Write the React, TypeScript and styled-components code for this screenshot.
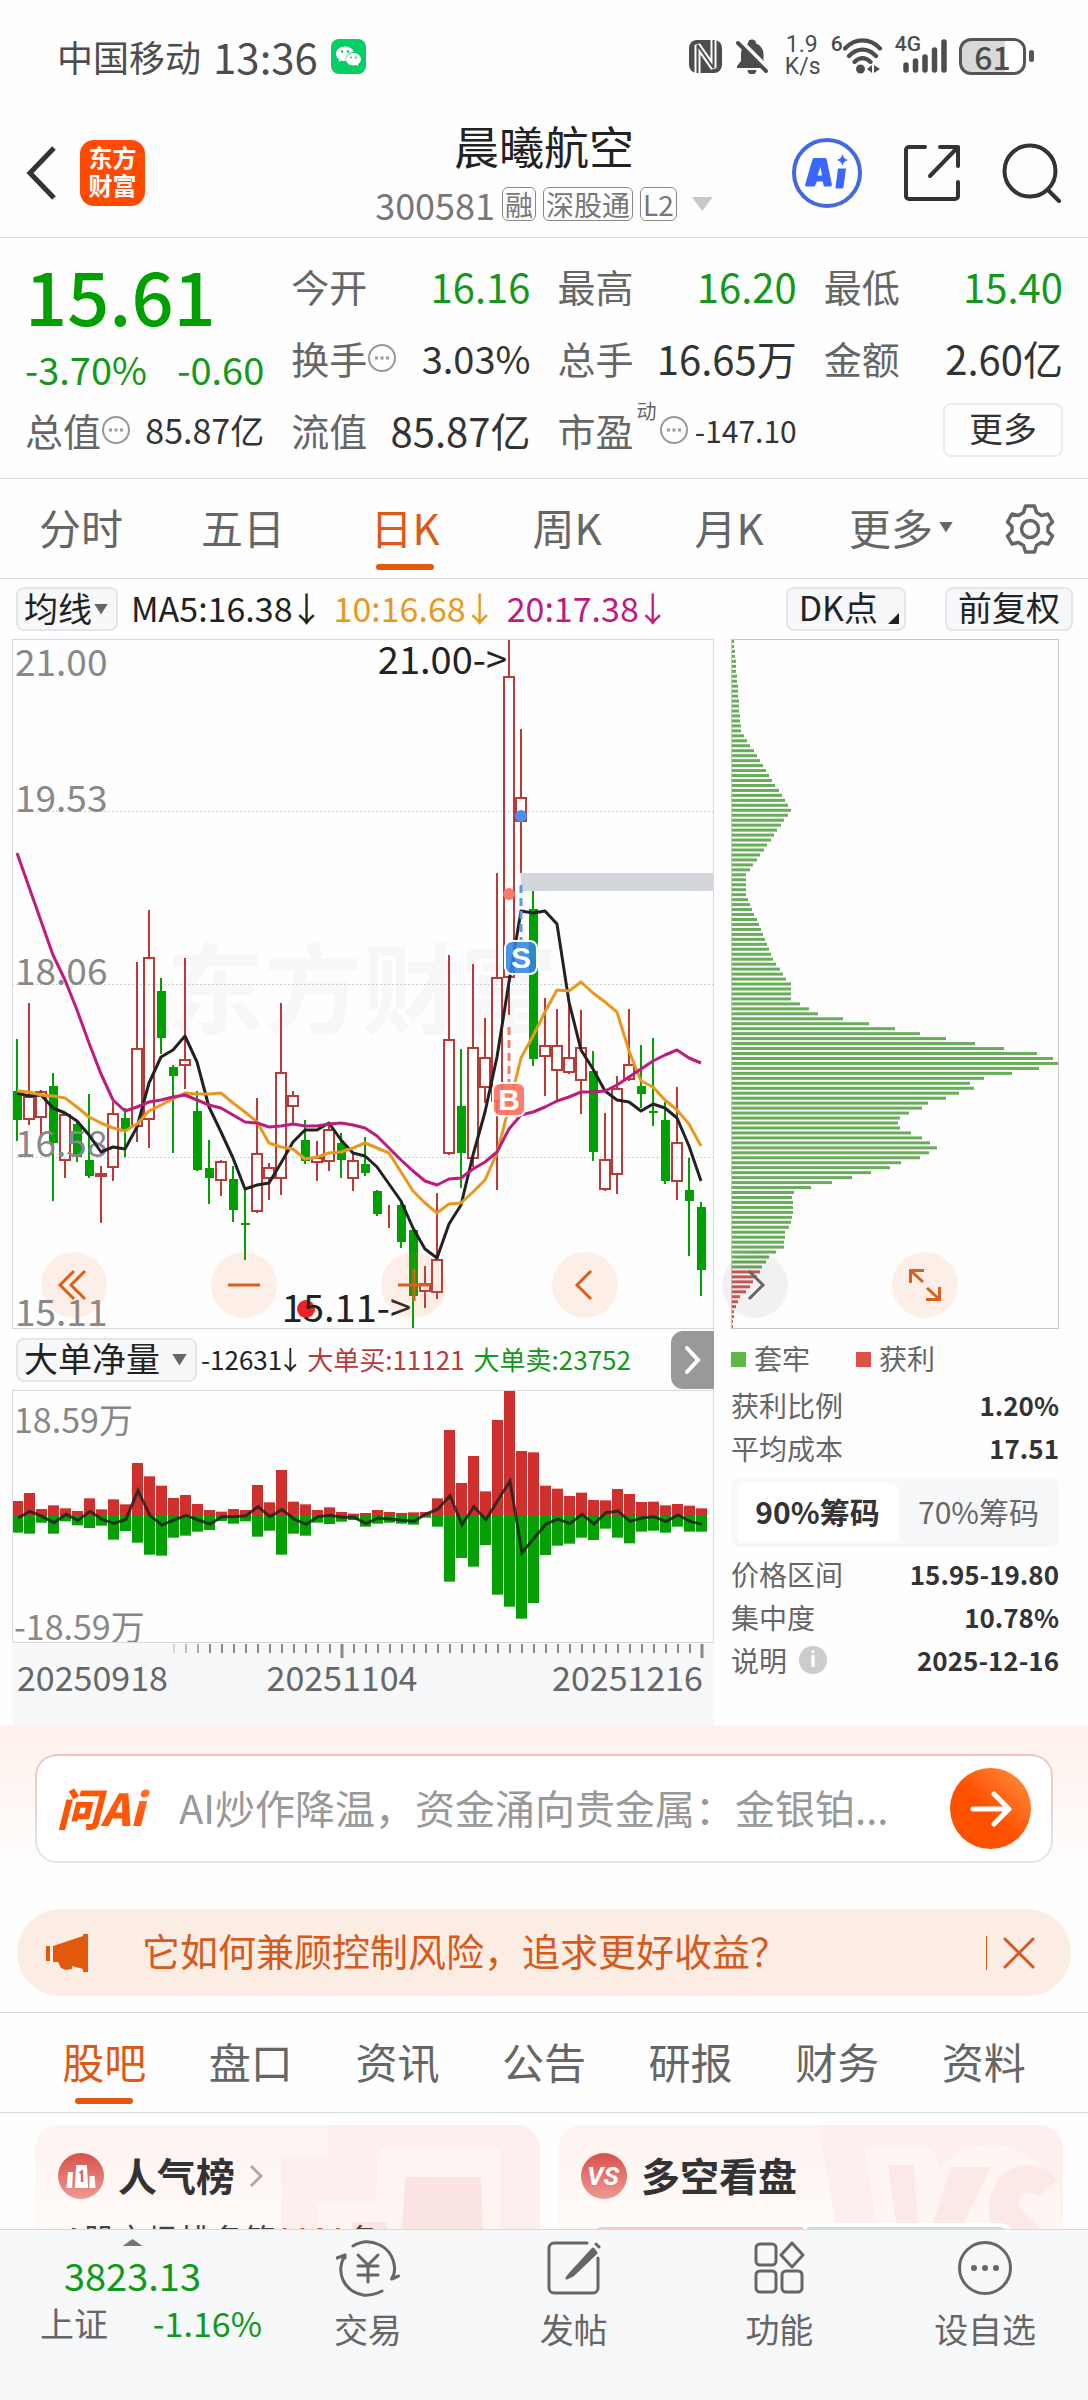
import React, { useState } from "react";
import styled, { createGlobalStyle, css } from "styled-components";

const FONT = '"Noto Sans CJK SC", "Noto Sans", sans-serif';
const GREEN = "#12981a";
const RED = "#b93a36";
const ORANGE = "#e3590c";
const LINE = "#d9d9d9";

const GlobalStyle = createGlobalStyle`
  * { box-sizing: border-box; }
  body { margin: 0; background: #fefefe; font-family: ${FONT}; color: #333; }
  button, input, select { font-family: inherit; color: inherit; margin: 0; }
  button { padding: 0; border: 0; background: none; cursor: pointer; }
  svg { display: block; flex: none; }
`;

/* ---------- page frame ---------- */

const Shell = styled.div`
  display: flex;
  flex-direction: column;
  height: 100vh;
  overflow: hidden;
`;

const Content = styled.main`
  flex: 1;
  min-height: 0;
  overflow: hidden;
`;

/* ---------- status bar ---------- */

const StatusBar = styled.div`
  display: flex;
  align-items: center;
  height: 112px;
  padding: 0 54px 0 57px;
  color: #4d4d4d;
`;
const Carrier = styled.span`
  font-size: 36px;
  line-height: 48px;
`;
const Clock = styled.span`
  margin: 0 13px 0 12px;
  font-size: 42px;
  line-height: 48px;
`;
const StatusRight = styled.div`
  display: flex;
  align-items: center;
  margin-left: auto;
`;
const Silent = styled.span`
  margin-left: 14px;
`;
const Speed = styled.div`
  width: 34px;
  margin: 0 12px 0 17px;
  font: 23px/22px Roboto, sans-serif;
  text-align: center;
`;
const SmallSup = styled.span<{ $tuck?: boolean }>`
  align-self: flex-start;
  margin: ${(p) => (p.$tuck ? "0 -18px 0 12px" : "0")};
  font: 500 21px/20px Roboto, sans-serif;
`;
const Battery = styled.div`
  display: flex;
  align-items: center;
  justify-content: center;
  width: 67px;
  height: 37px;
  margin: 0 3px 0 12px;
  border: 3px solid #555;
  border-radius: 12px;
  background: linear-gradient(90deg, #d9d9d9 70%, #fff 70%);
  font: 500 32px/30px ${FONT};
`;
const BatteryTip = styled.span`
  width: 5px;
  height: 12px;
  border-radius: 3px;
  background: #555;
`;

/* ---------- header ---------- */

const Header = styled.header`
  display: grid;
  grid-template-columns: 1fr auto 1fr;
  height: 126px;
  border-bottom: 1px solid ${LINE};
`;
const HeaderSide = styled.div<{ $end?: boolean }>`
  display: flex;
  align-items: center;
  gap: ${(p) => (p.$end ? "41px" : "24px")};
  justify-content: ${(p) => (p.$end ? "flex-end" : "flex-start")};
  padding: ${(p) => (p.$end ? "0 26px 4px 0" : "0 0 4px 26px")};
`;
const Brand = styled.a`
  display: flex;
  flex-direction: column;
  align-items: center;
  justify-content: center;
  width: 65px;
  height: 66px;
  padding-bottom: 4px;
  border-radius: 14px;
  background: #ff4a00;
  color: #fff;
  font: 700 24px/28px ${FONT};
  text-decoration: none;
`;
const TitleBlock = styled.div`
  display: flex;
  flex-direction: column;
  align-items: center;
  padding-top: 6px;
`;
const Title = styled.h1`
  margin: 0;
  color: #222;
  font-size: 45px;
  font-weight: 400;
  line-height: 56px;
`;
const Caret = styled.span<{ $w: number; $h: number; $color: string; $up?: boolean }>`
  width: ${(p) => p.$w}px;
  height: ${(p) => p.$h}px;
  background: ${(p) => p.$color};
  clip-path: ${(p) => (p.$up ? "polygon(0 100%, 100% 100%, 50% 0)" : "polygon(0 0, 100% 0, 50% 100%)")};
  pointer-events: none;
`;
const CodeLine = styled.div`
  display: flex;
  align-items: center;
  gap: 7px;
  margin-top: 13px;
  color: #777;
  font-size: 36px;
  line-height: 34px;

  ${Caret} { margin-left: 8px; }
`;
const Tag = styled.span`
  padding: 0 2px;
  border: 1px solid #888;
  border-radius: 6px;
  font-size: 28px;
  line-height: 32px;
`;

/* ---------- quote ---------- */

const Quote = styled.section`
  display: grid;
  grid-template-columns: repeat(4, minmax(0, 1fr));
  grid-template-rows: 73px 72px 72px;
  column-gap: 27px;
  padding: 11px 25px 12px;
  border-bottom: 1px solid ${LINE};
`;
const PriceBlock = styled.div`
  grid-row: span 2;
  color: ${GREEN};
`;
const Price = styled.div`
  color: #00a000;
  font-size: 74px;
  font-weight: 500;
  line-height: 90px;
`;
const Change = styled.div`
  display: flex;
  justify-content: space-between;
  margin-top: 6px;
  font-size: 38px;
  line-height: 48px;
`;
const Cell = styled.div`
  display: flex;
  align-items: center;
  white-space: nowrap;
`;
const CellName = styled.span`
  color: #666;
  font-size: 38px;
  line-height: 48px;
`;
const CellValue = styled.span<{ $size?: number; $green?: boolean }>`
  margin-left: auto;
  color: ${(p) => (p.$green ? GREEN : "#333")};
  font-size: ${(p) => p.$size ?? 40}px;
  line-height: 48px;
`;
const CellSup = styled.sup`
  align-self: flex-start;
  margin: 5px 2px 0 3px;
  color: #666;
  font-size: 20px;
  line-height: 24px;
`;
const MoreButton = styled.button`
  width: 120px;
  height: 54px;
  margin-left: auto;
  padding-bottom: 4px;
  border: 2px solid #ececec;
  border-radius: 8px;
  font-size: 34px;
  line-height: 44px;
`;

/* ---------- tabs ---------- */

const TabBar = styled.nav<{ $pad: number }>`
  display: flex;
  height: 100px;
  padding: 0 ${(p) => p.$pad}px;
  border-bottom: 1px solid ${LINE};
`;
const Tab = styled.button<{ $on: boolean }>`
  display: flex;
  flex: 1;
  flex-direction: column;
  align-items: center;
  padding-top: 18px;
  color: ${(p) => (p.$on ? "#dc5a14" : "#666")};
  font-size: 42px;
  line-height: 60px;

  &::after {
    width: 58px;
    height: 6px;
    margin-top: 7px;
    border-radius: 3px;
    background: ${(p) => (p.$on ? ORANGE : "transparent")};
    content: "";
  }
`;
const TabLabel = styled.span<{ $menu: boolean }>`
  display: flex;
  align-items: center;
  gap: 6px;
  margin-left: ${(p) => (p.$menu ? 20 : 0)}px;
`;
const GearButton = styled.button`
  display: flex;
  align-items: center;
  justify-content: center;
  width: 116px;
`;

/* ---------- chart area ---------- */

const MaRow = styled.div`
  display: flex;
  align-items: center;
  height: 60px;
  padding: 0 15px 0 16px;
  color: #222;
`;
const chip = css`
  border: 2px solid #e3e6ea;
  border-radius: 8px;
  background: #f7f8fa;
  color: #222;
  font-size: 34px;
  line-height: 36px;
`;
const Picker = styled.span<{ $gap: number }>`
  ${chip}
  display: flex;
  align-items: center;
  flex: none;
  height: 44px;
  padding: 0 8px 0 6px;

  select {
    height: 40px;
    padding: 0 ${(p) => p.$gap + 14}px 3px 0;
    border: 0;
    outline: 0;
    appearance: none;
    background: none;
    font-size: 34px;
    line-height: 36px;
  }
  ${Caret} { margin-left: -14px; }
`;
const MaValues = styled.div`
  display: flex;
  gap: 13px;
  margin-left: 13px;
  padding-bottom: 3px;
  font-size: 34px;
  line-height: 44px;
`;
const MaValue = styled.span<{ $color: string }>`
  display: flex;
  color: ${(p) => p.$color};
`;
const Arrow = styled.span`
  display: flex;
  justify-content: center;
  width: 28px;
`;
const MaButtons = styled.div`
  display: flex;
  gap: 39px;
  margin-left: auto;
`;
const ChipButton = styled.button`
  ${chip}
  display: flex;
  align-items: flex-end;
  justify-content: center;
  gap: 10px;
  height: 44px;
  padding: 0 11px 4px;
`;
const Corner = styled.span`
  width: 11px;
  height: 11px;
  margin: 0 -6px 1px 0;
  background: #222;
  clip-path: polygon(100% 0, 100% 100%, 0 100%);
`;
const Charts = styled.section`
  position: relative;
  display: grid;
  grid-template-columns: minmax(0, 702fr) minmax(0, 328fr);
  column-gap: 17px;
  padding: 0 29px 0 12px;
`;
const Plot = styled.svg`
  width: 100%;
  height: auto;
  overflow: visible;
  font-family: ${FONT};
`;
const PlotButtons = styled.div`
  position: absolute;
  top: 613px;
  right: 130px;
  left: 41px;
  display: flex;
  justify-content: space-between;
`;
const RoundButton = styled.button<{ $grey?: boolean }>`
  display: flex;
  align-items: center;
  justify-content: center;
  width: 66px;
  height: 66px;
  border-radius: 50%;
  background: ${(p) => (p.$grey ? "rgba(0, 0, 0, 0.05)" : "rgba(248, 120, 50, 0.11)")};
  color: ${(p) => (p.$grey ? "#666" : "#d9601c")};
`;
const IndicatorRow = styled.div`
  display: flex;
  align-items: center;
  height: 61px;
  padding-left: 4px;
  white-space: nowrap;
`;
const Flows = styled.div`
  display: flex;
  gap: 9px;
  margin-left: 4px;
  padding-bottom: 2px;
  font-size: 26px;
  line-height: 40px;
`;
const Flow = styled.span<{ $color: string }>`
  display: flex;
  color: ${(p) => p.$color};
`;
const FlowArrow = styled.span`
  display: flex;
  justify-content: center;
  width: 16px;
`;
const Expand = styled.button`
  display: flex;
  align-items: center;
  justify-content: center;
  width: 43px;
  height: 58px;
  margin-left: auto;
  border-radius: 12px 0 0 12px;
  background: #999;
`;

const Legend = styled.div`
  display: flex;
  gap: 46px;
  height: 43px;
  margin: 8px 0 3px;
`;
const LegendItem = styled.span<{ $color: string }>`
  display: flex;
  align-items: center;
  gap: 8px;
  color: #666;
  font-size: 28px;
  line-height: 43px;

  &::before {
    width: 15px;
    height: 15px;
    margin-top: 2px;
    background: ${(p) => p.$color};
    content: "";
  }
`;
const Facts = styled.dl`
  margin: 0;
`;
const Fact = styled.div`
  display: flex;
  align-items: center;
  justify-content: space-between;
  height: 43px;
  line-height: 40px;

  dt {
    display: flex;
    align-items: center;
    gap: 12px;
    color: #666;
    font-size: 28px;
  }
  dd {
    margin: 0;
    font-size: 26px;
    font-weight: 700;
  }
`;
const InfoDot = styled.span`
  display: flex;
  align-items: center;
  justify-content: center;
  width: 28px;
  height: 28px;
  border-radius: 50%;
  background: #ccc;
  color: #fff;
  font: 700 22px/28px Roboto, sans-serif;
`;
const Segments = styled.div`
  display: flex;
  height: 69px;
  margin: 9px 0 5px;
  padding: 5px 0 5px 6px;
  border-radius: 8px;
  background: #f7f8fa;
`;
const Segment = styled.button<{ $on: boolean }>`
  flex: 1;
  padding-bottom: 3px;
  border-radius: 6px;
  background: ${(p) => (p.$on ? "#fff" : "transparent")};
  color: ${(p) => (p.$on ? "#333" : "#666")};
  font-size: 30px;
  font-weight: ${(p) => (p.$on ? 700 : 400)};
  line-height: 44px;
`;

/* ---------- assistant and notice ---------- */

const Promo = styled.section`
  padding: 29px 17px 16px;
  border-bottom: 1px solid ${LINE};
  background: linear-gradient(#fff1ec, #fefefe 150px);
`;
const AskBox = styled.form`
  display: flex;
  align-items: center;
  height: 109px;
  margin: 0 18px 46px;
  padding: 0 20px;
  border: 2px solid transparent;
  border-radius: 22px;
  background: linear-gradient(#fff, #fff) padding-box, linear-gradient(#f3c4b8, #dfe7ec) border-box;
`;
const AskLogo = styled.span`
  display: flex;
  flex: none;
  align-items: center;
  width: 122px;
  padding-bottom: 4px;
  background: linear-gradient(60deg, #ff5000, #ff5a0a 60%, #ff9a5c);
  background-clip: text;
  color: transparent;
  font-size: 44px;
  font-style: italic;
  font-weight: 900;
  line-height: 56px;
`;
const AskInput = styled.input`
  flex: 1;
  min-width: 0;
  height: 60px;
  padding: 0 0 3px;
  border: 0;
  outline: 0;
  background: none;
  font-size: 40px;

  &::placeholder { color: #999; opacity: 1; }
`;
const AskGo = styled.button`
  display: flex;
  align-items: center;
  justify-content: center;
  width: 81px;
  height: 81px;
  border-radius: 50%;
  background: linear-gradient(45deg, #ff5000 45%, #ff9244);
`;
const Notice = styled.div`
  display: flex;
  align-items: center;
  height: 87px;
  padding: 0 36px 0 28px;
  border-radius: 44px;
  background: #fcede4;
  color: #d65a1c;
`;
const NoticeText = styled.a`
  flex: 1;
  padding: 0 0 5px 52px;
  color: inherit;
  font-size: 38px;
  line-height: 50px;
  text-decoration: none;
`;
const NoticeClose = styled.button`
  display: flex;
  padding-left: 16px;
  border-left: 1px solid #d65a1c;
`;

/* ---------- community cards ---------- */

const Cards = styled.section`
  display: grid;
  grid-template-columns: repeat(2, minmax(0, 1fr));
  gap: 18px;
  padding: 12px 25px 0 35px;
`;
const Card = styled.article`
  position: relative;
  height: 260px;
  padding: 21px 23px 0;
  overflow: hidden;
  border-radius: 24px;
  background: linear-gradient(#fef3f1, #fffaf7 90px);
`;
const CardArt = styled.svg`
  position: absolute;
  top: 0;
  right: 0;
`;
const CardHead = styled.h2`
  position: relative;
  display: flex;
  align-items: center;
  gap: 14px;
  height: 60px;
  margin: 0;
  font-size: 39px;
  font-weight: 700;
  line-height: 56px;
`;
const CardTitle = styled.span`
  padding-bottom: 5px;
`;
const CardText = styled.p`
  position: relative;
  margin: 8px 0 0 6px;
  color: #444;
  font-size: 32px;
  line-height: 48px;

  em { color: #d8402c; font-style: normal; }
`;
const Versus = styled.div`
  position: relative;
  display: flex;
  height: 40px;
  margin: 17px 22px 0 2px;
  border: 4px solid #fff;
  border-radius: 20px;
  background: linear-gradient(100deg, #f3c9c5 50%, #fff 50%, #fff 51%, #c9ddda 51%);
`;

/* ---------- bottom bar ---------- */

const BottomBar = styled.footer`
  display: flex;
  flex: none;
  height: 171px;
  border-top: 1px solid ${LINE};
  background: #f7f8fa;
`;
const IndexCell = styled.button`
  display: flex;
  flex-direction: column;
  align-items: center;
  width: 265px;
  padding-top: 9px;
  color: ${GREEN};
  font-size: 38px;
  line-height: 48px;
`;
const IndexValue = styled.span`
  margin-top: 5px;
`;
const IndexRow = styled.span`
  display: flex;
  justify-content: space-between;
  width: 100%;
  padding: 0 3px 0 40px;
  font-size: 34px;
`;
const IndexName = styled.span`
  color: #666;
`;
const BarButton = styled.button`
  display: flex;
  flex: 1;
  flex-direction: column;
  align-items: center;
  padding-top: 9px;
  color: #666;
  font-size: 34px;
  line-height: 48px;

  svg { margin-bottom: 8px; }
`;

/* ---------- data ---------- */

const LEFT = 12;
const STEP = 12;
const candleX = (i: number) => 17 + i * STEP;

// [rising, high, body top, body bottom, low]
type Candle = [0 | 1, number, number, number, number];
const candles: Candle[] = [
  [0, 1039, 1091, 1120, 1141], [1, 1003, 1096, 1120, 1125], [1, 1090, 1091, 1118, 1137],
  [0, 1073, 1086, 1143, 1201], [1, 1112, 1114, 1161, 1178], [0, 1120, 1124, 1157, 1162],
  [0, 1094, 1160, 1176, 1178], [1, 1166, 1173, 1177, 1223], [1, 1102, 1113, 1168, 1181],
  [0, 1108, 1118, 1130, 1157], [1, 962, 1048, 1127, 1142], [1, 910, 957, 1120, 1148],
  [0, 978, 991, 1038, 1054], [0, 1065, 1067, 1076, 1153], [1, 958, 1059, 1066, 1089],
  [0, 1091, 1111, 1170, 1171], [0, 1140, 1168, 1178, 1204], [1, 1160, 1161, 1181, 1196],
  [0, 1166, 1179, 1210, 1222], [0, 1190, 1223, 1225, 1260], [1, 1098, 1153, 1212, 1213],
  [1, 1163, 1167, 1179, 1200], [1, 1003, 1072, 1179, 1195], [1, 1091, 1095, 1107, 1124],
  [0, 1120, 1140, 1161, 1164], [1, 1141, 1157, 1163, 1181], [1, 1123, 1129, 1162, 1171],
  [0, 1133, 1143, 1160, 1178], [1, 1153, 1160, 1179, 1191], [0, 1137, 1164, 1173, 1176],
  [0, 1190, 1191, 1214, 1216], [1, 1205, 1213, 1213, 1228], [0, 1203, 1205, 1242, 1248],
  [0, 1229, 1230, 1296, 1329], [1, 1266, 1283, 1292, 1308], [1, 1193, 1259, 1293, 1299],
  [1, 955, 1039, 1154, 1155], [0, 1049, 1106, 1153, 1188], [1, 964, 1047, 1159, 1167],
  [1, 1018, 1057, 1088, 1103], [1, 873, 977, 1102, 1190], [1, 639, 676, 978, 1015],
  [1, 729, 797, 822, 873], [0, 891, 909, 1059, 1066], [1, 998, 1045, 1057, 1096],
  [1, 1009, 1045, 1071, 1101], [1, 1000, 1057, 1073, 1074], [1, 1010, 1047, 1081, 1114],
  [0, 1051, 1071, 1152, 1161], [1, 1113, 1159, 1190, 1191], [1, 1076, 1088, 1175, 1194],
  [1, 1009, 1064, 1080, 1081], [0, 1045, 1086, 1094, 1108], [0, 1038, 1111, 1113, 1126],
  [0, 1102, 1120, 1181, 1184], [1, 1087, 1142, 1182, 1200], [0, 1158, 1190, 1201, 1256],
  [0, 1202, 1207, 1270, 1296],
];

const ma5 = [
  1093, 1096, 1095, 1108, 1113, 1121, 1135, 1152, 1147, 1149, 1127, 1083, 1057, 1050, 1036, 1062,
  1107, 1132, 1158, 1189, 1185, 1183, 1163, 1142, 1130, 1130, 1123, 1140, 1153, 1156, 1167, 1184,
  1201, 1228, 1249, 1258, 1224, 1205, 1155, 1112, 1057, 982, 911, 913, 911, 924, 1002, 1050, 1069,
  1091, 1100, 1102, 1111, 1104, 1108, 1118, 1146, 1181,
];
const ma10 = [
  1091, 1092, 1095, 1096, 1098, 1107, 1117, 1123, 1128, 1131, 1124, 1111, 1105, 1099, 1093, 1094,
  1094, 1093, 1103, 1112, 1122, 1143, 1147, 1149, 1159, 1157, 1153, 1152, 1148, 1143, 1148, 1153,
  1172, 1191, 1203, 1213, 1204, 1203, 1192, 1180, 1153, 1107, 1058, 1036, 1012, 990, 991, 982, 993,
  1002, 1012, 1051, 1081, 1087, 1100, 1110, 1124, 1146,
];
const ma20 = [
  853, 887, 921, 955, 980, 1010, 1043, 1074, 1100, 1111, 1107, 1102, 1100, 1097, 1095, 1100, 1105,
  1108, 1115, 1122, 1123, 1127, 1126, 1124, 1126, 1126, 1124, 1123, 1125, 1128, 1136, 1148, 1160,
  1171, 1181, 1185, 1179, 1178, 1169, 1162, 1152, 1129, 1115, 1112, 1107, 1101, 1097, 1092, 1092,
  1091, 1085, 1077, 1069, 1061, 1055, 1050, 1058, 1063,
];

const bigBuy = [
  45, 69, 21, 32, 23, 15, 53, 20, 50, 35, 159, 119, 91, 54, 63, 36, 18, 13, 21, 18, 93, 41, 138, 43,
  35, 18, 26, 12, 7, 9, 18, 12, 9, 11, 12, 53, 258, 99, 180, 74, 288, 378, 195, 191, 91, 82, 60, 70,
  48, 47, 81, 66, 42, 43, 32, 36, 31, 23,
];
const bigSell = [
  50, 53, 20, 53, 16, 28, 36, 29, 71, 45, 80, 116, 119, 65, 59, 47, 42, 15, 23, 16, 62, 44, 116, 53,
  59, 20, 24, 17, 12, 32, 23, 20, 23, 26, 5, 32, 197, 126, 152, 87, 236, 272, 308, 261, 117, 89, 83,
  65, 72, 38, 65, 82, 47, 44, 50, 32, 47, 47,
];
const netFlow = [
  -6, 14, -1, -20, 5, -13, 14, -10, -22, -10, 77, 1, -27, -12, 2, -12, -24, -2, -2, 1, 28, -2, 19, -9,
  -25, -2, 2, -4, -4, -23, -6, -9, -13, -16, 6, 21, 61, -26, 28, -11, 48, 105, -110, -67, -24, -9,
  -23, 5, -24, 10, 15, -16, -6, -2, -17, 3, -16, -25,
];

// chip distribution: [level, length] knots, filled in linearly between
const chipKnots: [number, number][] = [
  [0, 2], [18, 9], [34, 59], [46, 18], [47, 14], [51, 14], [61, 35], [64, 41], [68, 54], [69, 59],
  [72, 59], [75, 86], [76, 111], [80, 214], [82, 272], [83, 305], [84, 321], [85, 327], [86, 307],
  [88, 252], [89, 238], [90, 242], [91, 227], [92, 214], [93, 196], [94, 190], [95, 177], [96, 168],
  [97, 166], [98, 168], [99, 179], [100, 190], [102, 205], [104, 188], [105, 169], [106, 158],
  [108, 120], [110, 79], [111, 62], [112, 60], [114, 61], [116, 60], [118, 57], [119, 53],
  [122, 52], [123, 44], [124, 37], [126, 30], [127, 28], [130, 18], [131, 14], [132, 8], [135, 2],
  [138, 1],
];
const CHIP_LEVELS = 139;
const chips = Array.from({ length: CHIP_LEVELS }, (_, level) => {
  const k = Math.max(1, chipKnots.findIndex(([l]) => l >= level));
  const [l0, v0] = chipKnots[k - 1];
  const [l1, v1] = chipKnots[k];
  return Math.round(v0 + ((v1 - v0) * (level - l0)) / (l1 - l0));
});

const path = (values: number[]) => values.map((y, i) => `${candleX(i)},${y}`).join(" ");

/* ---------- drawings ---------- */

const MoreDots = () => (
  <svg width="30" height="30" viewBox="0 0 30 30" fill="none" stroke="#999" strokeWidth="2">
    <circle cx="15" cy="15" r="13" />
    <path d="M8 15h3M13.500 15h3M19 15h3" strokeWidth="3" />
  </svg>
);

const PriceChart = () => (
  <Plot viewBox="12 639 702 690" role="img" aria-label="日K">
    <text x="166" y="1026" fontSize="98" fontWeight="700" fill="#f7f7f7">东方财富</text>
    <g stroke="#cfcfcf" strokeDasharray="2 2">
      <path d="M12 811.500H714M12 984.500H714M12 1157.500H714" />
    </g>
    <rect x="521" y="873" width="193" height="18" fill="#d3d7dc" />
    {candles.map(([up, high, top, bottom, low], i) => {
      const x = candleX(i);
      return up ? (
        <g key={i} stroke={RED} strokeWidth="2" fill="none">
          <path d={`M${x} ${high}V${top}M${x} ${bottom}V${low}`} />
          <rect x={x - 5} y={top + 1} width="10" height={Math.max(0, bottom - top - 2)} />
        </g>
      ) : (
        <g key={i} fill="#00a000">
          <rect x={x - 1} y={high} width="2" height={low - high} />
          <rect x={x - 4} y={top} width="9" height={bottom - top} />
        </g>
      );
    })}
    <g fontSize="37" fill="#888">
      <text x="15" y="676">21.00</text>
      <text x="15" y="812">19.53</text>
      <text x="15" y="985">18.06</text>
      <text x="15" y="1157">16.58</text>
      <text x="15" y="1326">15.11</text>
    </g>
    <g fill="none" strokeWidth="3" strokeLinejoin="round">
      <polyline points={path(ma5)} stroke="#222" />
      <polyline points={path(ma10)} stroke="#e8981e" />
      <polyline points={path(ma20)} stroke="#bf1b7c" />
    </g>
    <path d="M521 885V942" stroke="#5b98ee" strokeWidth="3" strokeDasharray="8 5" />
    <path d="M509 1027V1084" stroke="#f07c70" strokeWidth="3" strokeDasharray="8 5" />
    <circle cx="521" cy="816" r="6" fill="#4a8ff5" />
    <circle cx="509" cy="894" r="6" fill="#ff7766" />
    <g stroke="#fff" strokeWidth="2">
      <rect x="505" y="941" width="32" height="33" rx="7" fill="#2f86e6" fillOpacity=".88" />
      <rect x="493" y="1083" width="32" height="33" rx="7" fill="#ff6a58" fillOpacity=".88" />
    </g>
    <g fontSize="30" fontWeight="700" fill="#fff" textAnchor="middle" fontFamily="Liberation Sans, sans-serif">
      <text x="521" y="968">S</text>
      <text x="509" y="1110">B</text>
    </g>
    <circle cx="306" cy="1309" r="9" fill="#ee2222" />
    <g fontSize="38" fill="#222">
      <text x="507" y="674" textAnchor="end">21.00-&gt;</text>
      <text x="411" y="1322" textAnchor="end">15.11-&gt;</text>
    </g>
    <rect x="12.500" y="639.500" width="701" height="689" fill="none" stroke="#d9d9d9" />
  </Plot>
);

const ChipChart = () => (
  <Plot viewBox="0 0 328 690" role="img" aria-label="筹码分布">
    {chips.map((length, level) => (
      <rect
        key={level}
        x="1"
        y={1 + (level * 690) / CHIP_LEVELS}
        width={length}
        height="3"
        fill={level < 127 ? "#68ad59" : "#cf5a58"}
      />
    ))}
    <rect x=".5" y=".5" width="327" height="689" fill="none" stroke="#c8c8c8" />
  </Plot>
);

const FlowChart = () => (
  <Plot viewBox="12 1390 702 253" role="img" aria-label="大单净量">
    {bigBuy.map((v, i) => (
      <rect key={i} x={LEFT + i * STEP} y={1516 - v / 3} width="11" height={v / 3} fill="#cf2f2d" />
    ))}
    {bigSell.map((v, i) => (
      <rect key={i} x={LEFT + i * STEP} y="1516" width="11" height={v / 3} fill="#06a006" />
    ))}
    <polyline
      points={netFlow.map((v, i) => `${LEFT + 6 + i * STEP},${1516 - v / 3}`).join(" ")}
      fill="none"
      stroke="#222"
      strokeOpacity=".85"
      strokeWidth="3"
    />
    <g fontSize="34" fill="#888">
      <text x="14" y="1433">18.59万</text>
      <text x="14" y="1640">-18.59万</text>
    </g>
    <rect x="12.500" y="1390.500" width="701" height="252" fill="none" stroke="#d9d9d9" />
  </Plot>
);

const TimeAxis = () => (
  <Plot viewBox="12 1643 702 82" role="img" aria-label="日期">
    <rect x="12" y="1643" width="702" height="82" fill="#f7f8fa" />
    <g stroke="#888" strokeWidth="2">
      {Array.from({ length: 45 }, (_, i) => {
        const major = i === 14 || i === 44;
        return (
          <path
            key={i}
            d={`M${174 + i * STEP} 1644V${major ? 1658 : 1653}`}
            strokeWidth={major ? 3 : 2}
            strokeOpacity={i < 3 ? 0.3 + i * 0.2 : 1}
          />
        );
      })}
    </g>
    <g fontSize="34" fill="#666">
      <text x="17" y="1691">20250918</text>
      <text x="342" y="1691" textAnchor="middle">20251104</text>
      <text x="703" y="1691" textAnchor="end">20251216</text>
    </g>
  </Plot>
);

const WeChat = () => (
  <svg width="35" height="35" viewBox="0 0 35 35">
    <rect width="35" height="35" rx="8" fill="#05ce66" />
    <path fill="#fff" d="M14 7.500c-5 0-9 3.200-9 7.300 0 2.300 1.300 4.200 3.200 5.600l-.7 2.600 2.900-1.500c1.100.4 2.300.6 3.600.6h.8c-1.200-5 3-9.200 8-9-.8-3.300-4.500-5.600-8.800-5.600z" />
    <path fill="#fff" d="M22.500 14c-4.200 0-7.500 2.700-7.500 6.200s3.300 6.200 7.500 6.200c.9 0 1.800-.1 2.600-.4l2.400 1.300-.6-2.200c1.900-1.200 3.100-2.900 3.100-4.900 0-3.500-3.300-6.200-7.500-6.200z" />
    <g fill="#05ce66">
      <circle cx="11" cy="12.500" r="1.300" />
      <circle cx="17" cy="12.500" r="1.300" />
      <circle cx="20" cy="18.500" r="1" />
      <circle cx="25" cy="18.500" r="1" />
    </g>
  </svg>
);

const StatusIcons = {
  nfc: (
    <svg width="33" height="33" viewBox="0 0 33 33">
      <rect width="33" height="33" rx="8" fill="#4d4d4d" />
      <path d="M8.500 33V5L24.500 28V0" fill="none" stroke="#fff" strokeWidth="6" strokeLinejoin="bevel" />
      <path d="M8.500 33V5L24.500 28V0" fill="none" stroke="#4d4d4d" strokeWidth="2" strokeLinejoin="bevel" />
    </svg>
  ),
  bell: (
    <svg width="32" height="35" viewBox="0 0 32 35">
      <path d="M12 4.500a4 4 0 0 1 8 0c5 2 7.500 6 7.500 11v6.500l3.500 5v2H1v-2l4-5v-7C5 10 8 6 12 4.500zM11.500 31h9a4.500 4.500 0 0 1-9 0z" fill="#4d4d4d" />
      <path d="M4 1L34 31" stroke="#fefefe" strokeWidth="4" />
      <path d="M2 4L30 32" stroke="#4d4d4d" strokeWidth="4" strokeLinecap="round" />
    </svg>
  ),
  wifi: (
    <svg width="40" height="36" viewBox="0 0 40 36" fill="none" stroke="#4d4d4d" strokeWidth="4.200" strokeLinecap="round">
      <path d="M2 10.500C12-.3 27-.3 37 10.500M6 18c8-8.500 19-8.500 27 0M11.500 24c5-5.300 11-5.300 16 0" />
      <circle cx="17.500" cy="31" r="4.500" fill="#4d4d4d" stroke="none" />
      <path d="M29 27v8l-5-4zM31 27v8l6-4z" fill="#4d4d4d" stroke="none" />
    </svg>
  ),
  signal: (
    <svg width="44" height="36" viewBox="0 0 44 36" stroke="#4d4d4d" strokeWidth="5.500" strokeLinecap="round">
      <path d="M3 27v5M12.500 23v9M22 19v13M31.500 12v20M41 4v28" />
    </svg>
  ),
};

const Gear = () => (
  <svg width="52" height="52" viewBox="0 0 52 52" fill="none" stroke="#666" strokeWidth="3.500" strokeLinejoin="round">
    <path d="M21.500 3h9l2 6.500 5 3 6.500-1.500 4.500 8-4.500 4.500v5l4.500 4.500-4.500 8-6.500-1.500-5 3-2 6.500h-9l-2-6.500-5-3L8 41l-4.500-8L8 28.500v-5L3.500 19 8 11l6.500 1.500 5-3z" />
    <circle cx="26" cy="26" r="8.500" />
  </svg>
);

const Chevron = ({ double, right }: { double?: boolean; right?: boolean }) => (
  <svg width="36" height="34" viewBox="0 0 36 34" fill="none" stroke="currentColor" strokeWidth="3">
    {double ? <path d="M18 3L4 17l14 14M29 3L15 17l14 14" /> : <path d={right ? "M12 3l14 14-14 14" : "M24 3L10 17l14 14"} />}
  </svg>
);

/* ---------- app ---------- */

const periods = ["分时", "五日", "日K", "周K", "月K", "更多"];
const topics = ["股吧", "盘口", "资讯", "公告", "研报", "财务", "资料"];

export default function App() {
  const [period, setPeriod] = useState("日K");
  const [topic, setTopic] = useState("股吧");
  const [share, setShare] = useState("90%筹码");

  return (
    <Shell>
      <GlobalStyle />
      <Content>
        <StatusBar>
          <Carrier>中国移动</Carrier>
          <Clock>13:36</Clock>
          <WeChat />
          <StatusRight>
            {StatusIcons.nfc}
            <Silent>{StatusIcons.bell}</Silent>
            <Speed>1.9<br />K/s</Speed>
            <SmallSup>6</SmallSup>
            {StatusIcons.wifi}
            <SmallSup $tuck>4G</SmallSup>
            {StatusIcons.signal}
            <Battery>61</Battery>
            <BatteryTip />
          </StatusRight>
        </StatusBar>

        <Header>
          <HeaderSide>
            <button aria-label="返回">
              <svg width="30" height="54" viewBox="0 0 30 54" fill="none" stroke="#333" strokeWidth="5">
                <path d="M28 2L4 27l24 25" />
              </svg>
            </button>
            <Brand href="#home"><span>东方</span><span>财富</span></Brand>
          </HeaderSide>
          <TitleBlock>
            <Title>晨曦航空</Title>
            <CodeLine>
              <span>300581</span>
              <Tag>融</Tag>
              <Tag>深股通</Tag>
              <Tag>L2</Tag>
              <Caret $w={21} $h={14} $color="#c8c8c8" />
            </CodeLine>
          </TitleBlock>
          <HeaderSide $end>
            <button aria-label="Ai">
              <svg width="70" height="70" viewBox="0 0 70 70">
                <circle cx="35" cy="35" r="33" fill="#fff" stroke="#4169e1" strokeWidth="4" />
                <path fill="#3a68ff" fillRule="evenodd" d="M22.500 20h10c1.500 0 2 .6 2.300 2l5 24c.3 1.700-.5 2.600-2 2.600h-6l-1-5h-6l-2 5h-7.500c-1.800 0-2.500-1-2-2.600l7-24c.5-1.500 1-2 2.200-2zM28.500 29l-3 8.500h4.500z" />
                <path fill="#3a68ff" d="M46 30.500h8L51.500 49c-.2 1-.7 1.500-1.700 1.500h-5c-1 0-1.500-.5-1.300-1.500zM50.500 16c1 3.600 2 4.700 5.500 6-3.500 1.300-4.500 2.400-5.500 6-1-3.600-2-4.700-5.500-6 3.500-1.300 4.500-2.400 5.500-6z" />
              </svg>
            </button>
            <button aria-label="分享">
              <svg width="58" height="58" viewBox="0 0 58 58" fill="none" stroke="#333" strokeWidth="4" strokeLinecap="round" strokeLinejoin="round">
                <path d="M22 3H6a3 3 0 0 0-3 3v46a3 3 0 0 0 3 3h46a3 3 0 0 0 3-3V38M27 32L55 3M37 3h18v19" />
              </svg>
            </button>
            <button aria-label="搜索">
              <svg width="60" height="60" viewBox="0 0 60 60" fill="none" stroke="#333" strokeWidth="4" strokeLinecap="round">
                <circle cx="28" cy="28" r="25.500" />
                <path d="M46 47l11 11" />
              </svg>
            </button>
          </HeaderSide>
        </Header>

        <Quote>
          <PriceBlock>
            <Price>15.61</Price>
            <Change><span>-3.70%</span><span>-0.60</span></Change>
          </PriceBlock>
          <Cell><CellName>今开</CellName><CellValue $green>16.16</CellValue></Cell>
          <Cell><CellName>最高</CellName><CellValue $green>16.20</CellValue></Cell>
          <Cell><CellName>最低</CellName><CellValue $green>15.40</CellValue></Cell>
          <Cell><CellName>换手</CellName><MoreDots /><CellValue $size={38}>3.03%</CellValue></Cell>
          <Cell><CellName>总手</CellName><CellValue>16.65万</CellValue></Cell>
          <Cell><CellName>金额</CellName><CellValue>2.60亿</CellValue></Cell>
          <Cell><CellName>总值</CellName><MoreDots /><CellValue $size={34}>85.87亿</CellValue></Cell>
          <Cell><CellName>流值</CellName><CellValue>85.87亿</CellValue></Cell>
          <Cell>
            <CellName>市盈</CellName><CellSup>动</CellSup><MoreDots />
            <CellValue $size={30}>-147.10</CellValue>
          </Cell>
          <Cell><MoreButton>更多</MoreButton></Cell>
        </Quote>

        <TabBar $pad={0}>
          {periods.map((p) => (
            <Tab key={p} $on={p === period} onClick={() => setPeriod(p)}>
              <TabLabel $menu={p === "更多"}>
                {p}
                {p === "更多" && <Caret $w={14} $h={11} $color="#666" />}
              </TabLabel>
            </Tab>
          ))}
          <GearButton aria-label="设置"><Gear /></GearButton>
        </TabBar>

        <MaRow>
          <Picker $gap={2}>
            <select aria-label="主图指标"><option>均线</option></select>
            <Caret $w={14} $h={11} $color="#666" />
          </Picker>
          <MaValues>
            <MaValue $color="#222">MA5:16.38<Arrow>↓</Arrow></MaValue>
            <MaValue $color="#e8981e">10:16.68<Arrow>↓</Arrow></MaValue>
            <MaValue $color="#bf1b7c">20:17.38<Arrow>↓</Arrow></MaValue>
          </MaValues>
          <MaButtons>
            <ChipButton>DK点<Corner /></ChipButton>
            <ChipButton>前复权</ChipButton>
          </MaButtons>
        </MaRow>

        <Charts>
          <div>
            <PriceChart />
            <IndicatorRow>
              <Picker $gap={12}>
                <select aria-label="副图指标"><option>大单净量</option></select>
                <Caret $w={15} $h={12} $color="#666" />
              </Picker>
              <Flows>
                <Flow $color="#222">-12631<FlowArrow>↓</FlowArrow></Flow>
                <Flow $color={RED}>大单买:11121</Flow>
                <Flow $color={GREEN}>大单卖:23752</Flow>
              </Flows>
              <Expand aria-label="下一指标">
                <svg width="20" height="30" viewBox="0 0 20 30" fill="none" stroke="#fff" strokeWidth="4" strokeLinecap="round">
                  <path d="M4 3l11 12L4 27" />
                </svg>
              </Expand>
            </IndicatorRow>
            <FlowChart />
            <TimeAxis />
          </div>
          <div>
            <ChipChart />
            <Legend>
              <LegendItem $color="#5cb847">套牢</LegendItem>
              <LegendItem $color="#e54d4b">获利</LegendItem>
            </Legend>
            <Facts>
              <Fact><dt>获利比例</dt><dd>1.20%</dd></Fact>
              <Fact><dt>平均成本</dt><dd>17.51</dd></Fact>
            </Facts>
            <Segments>
              {["90%筹码", "70%筹码"].map((s) => (
                <Segment key={s} $on={s === share} onClick={() => setShare(s)}>{s}</Segment>
              ))}
            </Segments>
            <Facts>
              <Fact><dt>价格区间</dt><dd>15.95-19.80</dd></Fact>
              <Fact><dt>集中度</dt><dd>10.78%</dd></Fact>
              <Fact><dt>说明<InfoDot>i</InfoDot></dt><dd>2025-12-16</dd></Fact>
            </Facts>
          </div>
          <PlotButtons>
            <RoundButton aria-label="最早"><Chevron double /></RoundButton>
            <RoundButton aria-label="缩小">
              <svg width="34" height="34" stroke="currentColor" strokeWidth="3"><path d="M1 17h32" /></svg>
            </RoundButton>
            <RoundButton aria-label="放大">
              <svg width="34" height="34" stroke="currentColor" strokeWidth="3"><path d="M1 17h32M17 1v32" /></svg>
            </RoundButton>
            <RoundButton aria-label="向前"><Chevron /></RoundButton>
            <RoundButton aria-label="向后" $grey><Chevron right /></RoundButton>
            <RoundButton aria-label="全屏">
              <svg width="34" height="34" viewBox="0 0 34 34" fill="none" stroke="currentColor" strokeWidth="3">
                <path d="M2.500 15V2.500H16M3 3l12 11M31.500 19v12.500H18M31 31L19 20" />
              </svg>
            </RoundButton>
          </PlotButtons>
        </Charts>

        <Promo>
          <AskBox onSubmit={(e) => e.preventDefault()}>
            <AskLogo>问Ai</AskLogo>
            <AskInput aria-label="问Ai" placeholder="AI炒作降温，资金涌向贵金属：金银铂..." />
            <AskGo aria-label="提问">
              <svg width="44" height="36" viewBox="0 0 44 36" fill="none" stroke="#fff" strokeWidth="5" strokeLinecap="round" strokeLinejoin="round">
                <path d="M4 18h36M25 3l15 15-15 15" />
              </svg>
            </AskGo>
          </AskBox>
          <Notice>
            <svg width="45" height="38" viewBox="0 0 45 38" fill={ORANGE}>
              <path d="M1 12h4v15H1zM8 12L38 2V0h5v38h-5v-3l-11-3v3l-6 1-5-2-3-6H8z" />
            </svg>
            <NoticeText href="#notice">它如何兼顾控制风险，追求更好收益？</NoticeText>
            <NoticeClose aria-label="关闭">
              <svg width="32" height="34" viewBox="0 0 32 34" stroke="currentColor" strokeWidth="3" strokeLinecap="round">
                <path d="M2 3l28 28M30 3L2 31" />
              </svg>
            </NoticeClose>
          </Notice>
        </Promo>

        <TabBar $pad={31}>
          {topics.map((t) => (
            <Tab key={t} $on={t === topic} onClick={() => setTopic(t)}>{t}</Tab>
          ))}
        </TabBar>

        <Cards>
          <Card>
            <CardArt width="265" height="104" viewBox="0 0 265 104">
              <path d="M54 0H265V104H6V30H54z" fill="#fdefed" />
              <path d="M105 24H225V104H42V78H100z" fill="#fff6f3" />
              <path d="M130 52H206L208 104H127z" fill="#fbe4e2" />
              <path d="M78 97h34v7H76z" fill="#fbe4e2" />
            </CardArt>
            <CardHead>
              <svg width="46" height="46" viewBox="0 0 46 46">
                <defs>
                  <linearGradient id="badge" x1="0" y1="0" x2="0" y2="1">
                    <stop offset="0" stopColor="#d9504c" />
                    <stop offset="1" stopColor="#ee9a94" />
                  </linearGradient>
                </defs>
                <circle cx="23" cy="23" r="23" fill="url(#badge)" />
                <path fill="#fff" d="M10 19h5l-1 16H8.500zM18 12h11l1 23H17zM31.500 23h5l1 12h-6z" />
                <path d="M21.500 20l2.500-1.500V29" fill="none" stroke="#de6a65" strokeWidth="2.500" />
              </svg>
              <CardTitle>人气榜</CardTitle>
              <svg width="14" height="24" viewBox="0 0 14 24" fill="none" stroke="#aaa" strokeWidth="3">
                <path d="M2 2l10 10L2 22" />
              </svg>
            </CardHead>
            <CardText>A股市场排名第<em>1101</em>名</CardText>
          </Card>
          <Card>
            <CardArt width="250" height="104" viewBox="0 0 250 104">
              <path d="M5 0H250V104H24z" fill="#fdefed" />
              <path d="M52 22h66l10 20c14-18 44-26 66-20 24 6 40 20 52 40l4 42H64z" fill="#fff6f3" />
              <path d="M75 40h26l4 64H84zM138 42h40l-30 62h-30zM180 104c-12-30 4-62 34-64 14 0 24 6 30 16l-18 16c-8-8-22-4-20 8 2 8 14 12 20 24z" fill="#fce8e6" />
            </CardArt>
            <CardHead>
              <svg width="46" height="46" viewBox="0 0 46 46">
                <circle cx="23" cy="23" r="23" fill="url(#badge)" />
                <text x="22" y="32" textAnchor="middle" fontSize="26" fontWeight="700" fontStyle="italic" fontFamily="Roboto, sans-serif" fill="#fff">VS</text>
              </svg>
              <CardTitle>多空看盘</CardTitle>
            </CardHead>
            <Versus />
          </Card>
        </Cards>
      </Content>

      <BottomBar>
        <IndexCell>
          <Caret $w={20} $h={7} $color="#777" $up />
          <IndexValue>3823.13</IndexValue>
          <IndexRow><IndexName>上证</IndexName><span>-1.16%</span></IndexRow>
        </IndexCell>
        <BarButton>
          <svg width="64" height="58" viewBox="0 0 64 58" fill="none" stroke="#666" strokeWidth="3" strokeLinecap="round" strokeLinejoin="round">
            <path d="M17 7C33-3 56 6 58.500 28c.5 5-1 9-3 12l7-3M9 16C-1 34 8 52 27 56c7 1 13-1 19-4M1 19l8-3v3" />
            <path d="M22 16l10 10 10-10M22 27h20M22 36h20M32 27v16" />
          </svg>
          交易
        </BarButton>
        <BarButton>
          <svg width="54" height="58" viewBox="0 0 54 58" fill="none" stroke="#666" strokeWidth="3" strokeLinecap="round" strokeLinejoin="round">
            <path d="M40 4H7a5 5 0 0 0-5 5v40a5 5 0 0 0 5 5h39a5 5 0 0 0 5-5V19" />
            <path d="M46 10L24 34l-4 5 6-3 23-22zM49 5l3 3" fill="#666" />
          </svg>
          发帖
        </BarButton>
        <BarButton>
          <svg width="52" height="58" viewBox="0 0 52 58" fill="none" stroke="#666" strokeWidth="3" strokeLinejoin="round">
            <rect x="3" y="5" width="20" height="21" rx="4" />
            <rect x="3" y="32" width="20" height="21" rx="4" />
            <rect x="29" y="32" width="20" height="21" rx="4" />
            <path d="M39 4l11 12-11 12-11-12z" />
          </svg>
          功能
        </BarButton>
        <BarButton>
          <svg width="54" height="58" viewBox="0 0 54 58" fill="none" stroke="#666" strokeWidth="3">
            <circle cx="27" cy="29" r="25.500" />
            <g fill="#666" stroke="none">
              <circle cx="16" cy="29" r="3" />
              <circle cx="27" cy="29" r="3" />
              <circle cx="38" cy="29" r="3" />
            </g>
          </svg>
          设自选
        </BarButton>
      </BottomBar>
    </Shell>
  );
}
